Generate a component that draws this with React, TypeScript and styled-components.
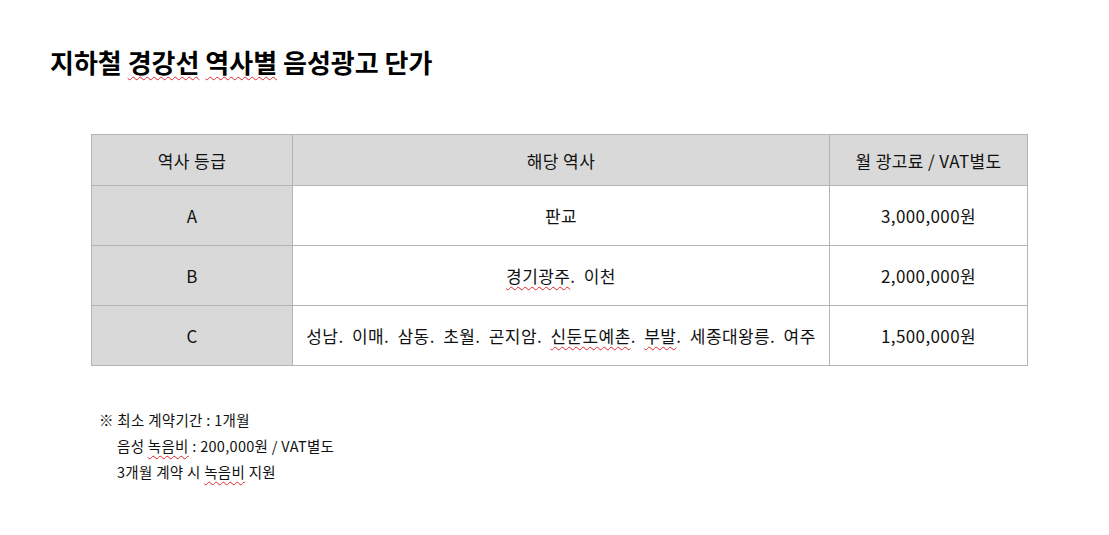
import React from 'react';
import styled, { createGlobalStyle } from 'styled-components';

const GlobalStyle = createGlobalStyle`
  html, body {
    margin: 0;
    padding: 0;
    background: #fff;
  }
  body {
    font-family: "Noto Sans CJK KR", "Noto Sans", sans-serif;
    color: #111;
  }
`;

const Page = styled.div`
  width: 1109px;
  height: 535px;
  padding: 44px 0 0 50px;
  box-sizing: border-box;
`;

const Title = styled.h1`
  margin: 0;
  font-size: 26px;
  font-weight: 700;
  line-height: 36px;
  letter-spacing: 0;
  color: #000;
`;

const Typo = styled.span`
  text-decoration: underline wavy #e0262b;
  text-decoration-thickness: 1px;
  text-underline-offset: 3px;
`;

const Table = styled.table`
  margin: 54px 0 0 41px;
  width: 936px;
  border-collapse: collapse;
  table-layout: fixed;
`;

const Th = styled.th`
  background: #d9d9d9;
  border: 1px solid #b4b4b4;
  height: 50px;
  font-size: 17px;
  letter-spacing: 0.4px;
  font-weight: 400;
  color: #111;
  text-align: center;
  padding: 0;
`;

const Td = styled.td<{ $grey?: boolean }>`
  background: ${p => (p.$grey ? '#d9d9d9' : '#fff')};
  border: 1px solid #b4b4b4;
  height: 59px;
  font-size: 17px;
  letter-spacing: 0.4px;
  color: #111;
  text-align: center;
  padding: 0;
  white-space: pre;
`;

const Notes = styled.div`
  margin: 41px 0 0 49px;
  font-size: 14.5px;
  letter-spacing: 0.3px;
  line-height: 26px;
  color: #111;
`;

const NoteLine = styled.div<{ $indent?: boolean }>`
  padding-left: ${p => (p.$indent ? '18px' : '0')};
`;

const rows = [
  { grade: 'A', stations: <>판교</>, price: '3,000,000원' },
  {
    grade: 'B',
    stations: (
      <>
        <Typo>경기광주</Typo>.  이천
      </>
    ),
    price: '2,000,000원',
  },
  {
    grade: 'C',
    stations: (
      <>
        성남.  이매.  삼동.  초월.  곤지암.  <Typo>신둔도예촌</Typo>.  <Typo>부발</Typo>.  세종대왕릉.  여주
      </>
    ),
    price: '1,500,000원',
  },
];

const App: React.FC = () => {
  return (
    <>
      <GlobalStyle />
      <Page>
        <Title>
          지하철 <Typo>경강선</Typo> <Typo>역사별</Typo> 음성광고 단가
        </Title>
        <Table>
          <colgroup>
            <col style={{ width: 201 }} />
            <col style={{ width: 537 }} />
            <col style={{ width: 198 }} />
          </colgroup>
          <thead>
            <tr>
              <Th>역사 등급</Th>
              <Th>해당 역사</Th>
              <Th>월 광고료 / VAT별도</Th>
            </tr>
          </thead>
          <tbody>
            {rows.map(r => (
              <tr key={r.grade}>
                <Td $grey>{r.grade}</Td>
                <Td>{r.stations}</Td>
                <Td>{r.price}</Td>
              </tr>
            ))}
          </tbody>
        </Table>
        <Notes>
          <NoteLine>※ 최소 계약기간 : 1개월</NoteLine>
          <NoteLine $indent>
            음성 <Typo>녹음비</Typo> : 200,000원 / VAT별도
          </NoteLine>
          <NoteLine $indent>
            3개월 계약 시 <Typo>녹음비</Typo> 지원
          </NoteLine>
        </Notes>
      </Page>
    </>
  );
};

export default App;
